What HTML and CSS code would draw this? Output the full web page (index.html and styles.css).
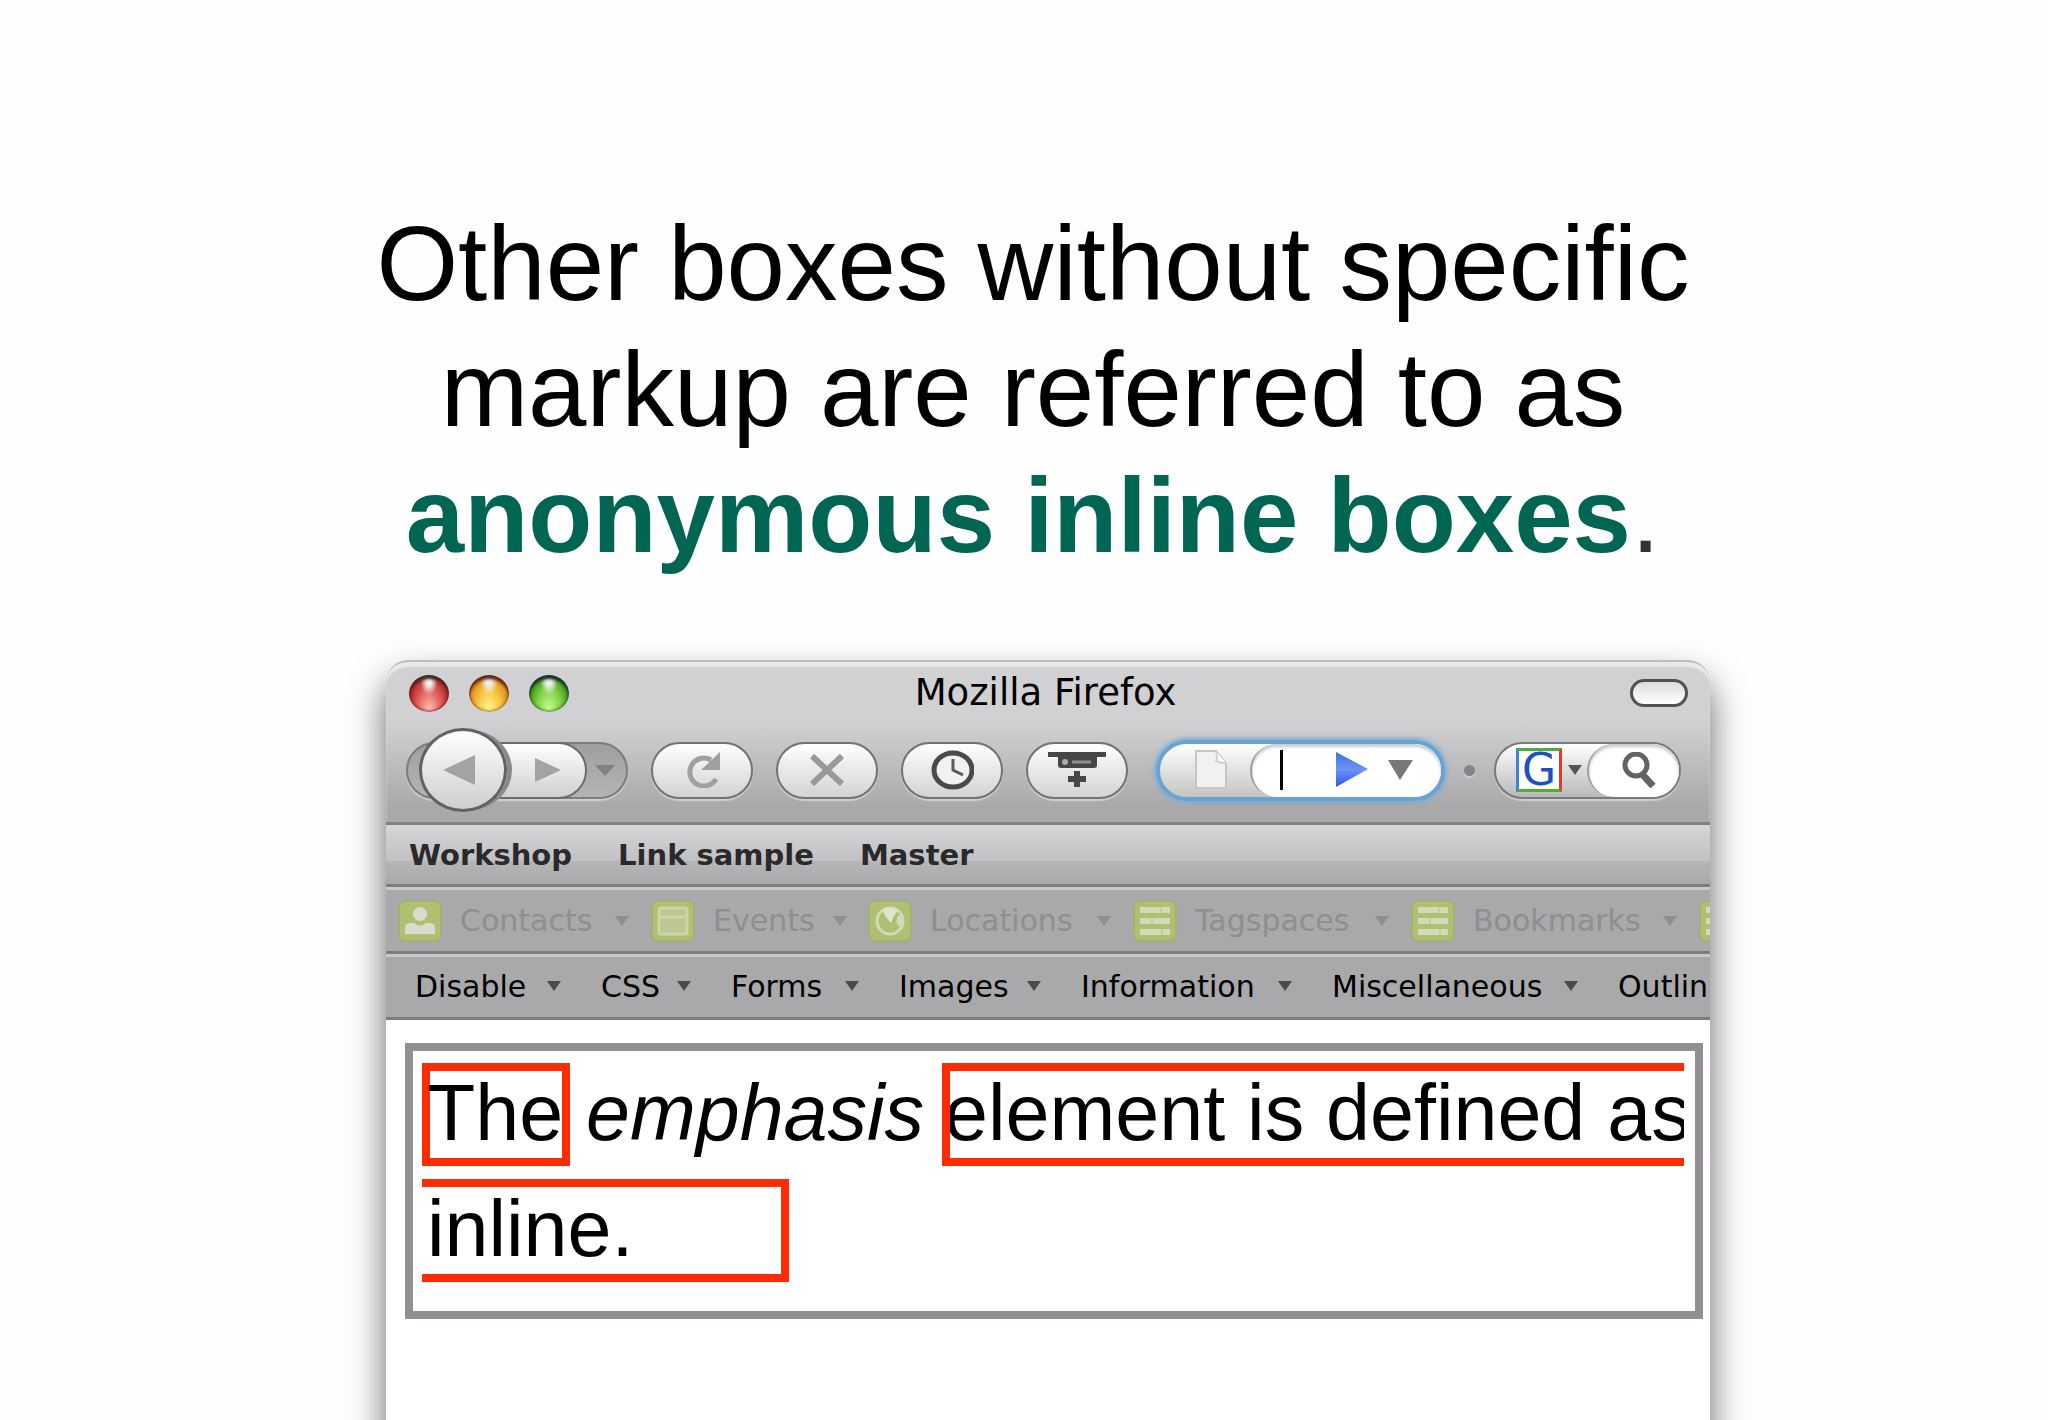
FILE: index.html
```html
<!DOCTYPE html>
<html lang="en">
<head>
<meta charset="utf-8">
<title>Anonymous inline boxes</title>
<link rel="stylesheet" href="styles.css">
</head>
<body>
<svg class="defs" width="0" height="0" aria-hidden="true">
  <defs>
    <linearGradient id="blue" x1="0" y1="0" x2="0" y2="1"><stop offset="0" stop-color="#3f6fe0"/><stop offset=".5" stop-color="#6c93f2"/><stop offset="1" stop-color="#2f55ee"/></linearGradient>
    <symbol id="arrow" viewBox="0 0 14 10"><path d="M0 0h14L7 10z" fill="currentColor"/></symbol>
    <symbol id="list" viewBox="0 0 44 42"><rect x="1" y="1" width="42" height="40" rx="6" fill="#b0c073" stroke="#a3b173" stroke-width="2"/><path d="M7 10h30M7 21h30M7 32h30" stroke="#d2dab8" stroke-width="6"/><path d="M18 21h2M28 32h2M27 10h2" stroke="#c2cd98" stroke-width="6"/></symbol>
  </defs>
</svg>
<main class="slide">
  <h1 class="heading">Other boxes without specific<br>markup are referred to as<br><strong>anonymous inline boxes</strong><span class="stop">.</span></h1>

  <section class="window" aria-label="Mozilla Firefox">
    <header class="chrome">
      <div class="titlebar">
        <div class="lights">
          <button class="light red" aria-label="Close"></button>
          <button class="light amber" aria-label="Minimize"></button>
          <button class="light green" aria-label="Zoom"></button>
        </div>
        <h2 class="title">Mozilla Firefox</h2>
        <button class="toggle" aria-label="Toggle toolbars"></button>
      </div>
      <div class="controls">
        <div class="nav">
          <button class="back" aria-label="Back"><svg width="32" height="30" viewBox="0 0 32 30"><path d="M0 15L32 0v30z" fill="#a3a2a4"/></svg></button>
          <button class="forward" aria-label="Forward"><svg width="26" height="24" viewBox="0 0 26 24"><path d="M26 12L0 0v24z" fill="#a3a2a4"/></svg></button>
          <button class="history" aria-label="History menu"><svg width="20" height="11" viewBox="0 0 20 11"><path d="M0 0h20L10 11z" fill="#828183"/></svg></button>
        </div>
        <button class="pill" aria-label="Reload"><svg width="38" height="36" viewBox="0 0 38 36"><path d="M28 8A14 14 0 1 0 33 27" fill="none" stroke="#a09fa1" stroke-width="5"/><path d="M37 0v18H18z" fill="#a09fa1"/></svg></button>
        <button class="pill" aria-label="Stop"><svg width="34" height="32" viewBox="0 0 34 32"><path d="M2 2l30 28M32 2L2 30" fill="none" stroke="#99989a" stroke-width="6"/></svg></button>
        <button class="pill" aria-label="Recent history"><svg width="44" height="40" viewBox="0 0 44 40"><ellipse cx="23" cy="20" rx="19" ry="17" fill="#f1f1f2" stroke="#4a494b" stroke-width="5"/><path d="M23 9v11l10 5" fill="none" stroke="#5a595b" stroke-width="3"/></svg></button>
        <button class="pill" aria-label="New tab"><svg width="58" height="36" viewBox="0 0 58 36"><path d="M0 0h58v5H49v8q0 3-3 3H13q-3 0-3-3V5H0z" fill="#464547"/><circle cx="17" cy="10" r="3" fill="#aaa"/><path d="M24 10h19" stroke="#929193" stroke-width="3"/><path d="M29 19v16M20 27h18" stroke="#464547" stroke-width="6"/></svg></button>
        <div class="url">
          <svg class="doc" width="34" height="40" viewBox="0 0 34 40"><path d="M2 1h20l10 12v25H2z" fill="#f1f1f2" stroke="#c6c6c7" stroke-width="2"/><path d="M22 1q2 8 0 10q4 2 10 2" fill="#fff" stroke="#d0d0d1" stroke-width="2"/></svg>
          <div class="field">
            <span class="caret"></span>
            <input class="address" type="text" aria-label="Address">
            <button class="plain" aria-label="Go"><svg width="32" height="36" viewBox="0 0 32 36"><path d="M0 0l32 17L0 35z" fill="url(#blue)"/></svg></button>
            <button class="plain" aria-label="Address history"><svg width="25" height="20" viewBox="0 0 25 20"><path d="M0 0h25L12 20z" fill="#78777a"/></svg></button>
          </div>
        </div>
        <span class="grip"></span>
        <div class="search">
          <button class="plain engine" aria-label="Search engine"><span class="g">G</span><svg width="14" height="10"><use href="#arrow"/></svg></button>
          <button class="find" aria-label="Search"><svg width="36" height="36" viewBox="0 0 36 36"><circle cx="16" cy="13" r="11" fill="none" stroke="#636264" stroke-width="5"/><path d="M22 22l11 12" stroke="#636264" stroke-width="7"/></svg></button>
        </div>
      </div>
    </header>

    <nav class="bookmarks" aria-label="Bookmarks">
      <a href="#workshop">Workshop</a><a href="#link">Link sample</a><a href="#master">Master</a>
    </nav>

    <div class="bar spaces">
      <button class="item" disabled><svg width="44" height="42" viewBox="0 0 44 42"><rect x="1" y="1" width="42" height="40" rx="6" fill="#b0c073" stroke="#a3b173" stroke-width="2"/><circle cx="22" cy="14" r="7" fill="#d9dccd"/><path d="M7 34v-6q0-5 6-5h3q6 5 12 0h3q6 0 6 5v6z" fill="#d9dccd"/></svg><span>Contacts</span><svg class="caret-down" width="14" height="10"><use href="#arrow"/></svg></button>
      <button class="item" disabled><svg width="44" height="42" viewBox="0 0 44 42"><rect x="1" y="1" width="42" height="40" rx="6" fill="#b0c073" stroke="#a3b173" stroke-width="2"/><rect x="8" y="8" width="28" height="26" rx="2" fill="#bcc794" stroke="#ccd5a8" stroke-width="3"/><path d="M8 17h28" stroke="#ccd5a8" stroke-width="3"/></svg><span>Events</span><svg class="caret-down" width="14" height="10"><use href="#arrow"/></svg></button>
      <button class="item" disabled><svg width="44" height="42" viewBox="0 0 44 42"><rect x="1" y="1" width="42" height="40" rx="6" fill="#b0c073" stroke="#a3b173" stroke-width="2"/><circle cx="22" cy="21" r="13" fill="#b0c073" stroke="#d2dab8" stroke-width="3"/><path d="M14 10q8-5 16 0l-4 6-3 7-5-6z" fill="#dfe4cd"/><path d="M30 15l5 2v6l-4 4-3-5z" fill="#d2dab8"/></svg><span>Locations</span><svg class="caret-down" width="14" height="10"><use href="#arrow"/></svg></button>
      <button class="item" disabled><svg width="44" height="42"><use href="#list"/></svg><span>Tagspaces</span><svg class="caret-down" width="14" height="10"><use href="#arrow"/></svg></button>
      <button class="item" disabled><svg width="44" height="42"><use href="#list"/></svg><span>Bookmarks</span><svg class="caret-down" width="14" height="10"><use href="#arrow"/></svg></button>
      <button class="item" disabled aria-label="More"><svg width="44" height="42"><use href="#list"/></svg></button>
    </div>

    <div class="bar developer">
      <button class="item">Disable<svg class="caret-down" width="14" height="10"><use href="#arrow"/></svg></button>
      <button class="item">CSS<svg class="caret-down" width="14" height="10"><use href="#arrow"/></svg></button>
      <button class="item">Forms<svg class="caret-down" width="14" height="10"><use href="#arrow"/></svg></button>
      <button class="item">Images<svg class="caret-down" width="14" height="10"><use href="#arrow"/></svg></button>
      <button class="item">Information<svg class="caret-down" width="14" height="10"><use href="#arrow"/></svg></button>
      <button class="item">Miscellaneous<svg class="caret-down" width="14" height="10"><use href="#arrow"/></svg></button>
      <button class="item">Outlin</button>
    </div>

    <div class="page">
      <div class="block">
        <div class="line">
          <span class="anon word">The</span>
          <em>emphasis</em>
          <span class="anon opens">element is defined as</span>
        </div>
        <div class="line">
          <span class="anon closes">inline.</span>
        </div>
      </div>
    </div>
  </section>
</main>
</body>
</html>
```
FILE: styles.css
```css
* { box-sizing: border-box; }

body {
  margin: 0;
  background: #fefefe;
  color: #000;
  font-family: "Liberation Sans", Arial, sans-serif;
}

button, input {
  margin: 0;
  padding: 0;
  border: 0;
  background: none;
  color: inherit;
  font: inherit;
}

svg { display: block; flex: none; }
.defs { position: absolute; }

.slide {
  display: flex;
  flex-direction: column;
  align-items: center;
  height: 100vh;
  padding: 201px 0 0 48px;
  overflow: hidden;
}

.heading {
  margin: 0 0 81px;
  padding-right: 30px;
  font-size: 105px;
  font-weight: 400;
  line-height: 126px;
  text-align: center;
}
.heading strong { color: #006653; }
.stop { color: #333; }

/* Browser window */
.window {
  display: flex;
  flex: 1 0 auto;
  flex-direction: column;
  width: 100%;
  max-width: 1324px;
  margin-bottom: -80px;
  border-radius: 22px 22px 0 0;
  background: #fff;
  box-shadow: 0 20px 36px rgba(0, 0, 0, .6);
  font-family: "DejaVu Sans", "Noto Sans", sans-serif;
  font-size: 30px;
}

.chrome {
  border-top: 2px solid #bdbdbe;
  border-bottom: 3px solid #828183;
  border-radius: 22px 22px 0 0;
  background: linear-gradient(#d1d0d2 60px, #a9a8aa 145px);
  box-shadow: inset 0 5px 2px #e9e9ea;
}

.titlebar {
  display: grid;
  grid-template-columns: 1fr auto 1fr;
  align-items: center;
  height: 62px;
  padding: 0 22px 0 23px;
}
.lights { display: flex; gap: 20px; }
.light {
  width: 40px;
  height: 37px;
  border-radius: 50%;
}
.red {
  background: radial-gradient(ellipse at 50% 20%, #eee 0 8%, transparent 30%), radial-gradient(ellipse at 50% 95%, #ffc4bb 0, #e2665f 40%, #b92824 72%);
  box-shadow: inset 0 4px 3px #40282b, inset 0 0 3px 1px #8a2020;
}
.amber {
  background: radial-gradient(ellipse at 50% 20%, #eee 0 8%, transparent 30%), radial-gradient(ellipse at 50% 95%, #fff69a 0, #f6c440 42%, #e08a10 75%);
  box-shadow: inset 0 4px 3px #5e2626, inset 0 0 3px 1px #97621c;
}
.green {
  background: radial-gradient(ellipse at 50% 20%, #eee 0 8%, transparent 30%), radial-gradient(ellipse at 50% 95%, #c6ff94 0, #84d24a 42%, #3f9a14 75%);
  box-shadow: inset 0 4px 3px #1d2f2b, inset 0 0 3px 1px #32701c;
}
.title {
  margin: 0;
  padding-right: 6px;
  font-size: 37px;
  font-weight: 400;
  line-height: 48px;
}
.toggle {
  justify-self: end;
  width: 58px;
  height: 28px;
  border: 3px solid #515052;
  border-radius: 14px;
  background: linear-gradient(#dcdcdd, #fff);
}

.controls {
  display: flex;
  align-items: center;
  gap: 23px;
  height: 98px;
  padding: 0 29px 6px 20px;
}

.nav {
  display: flex;
  align-items: center;
  width: 222px;
  height: 57px;
  border: 2px solid #7d7c7e;
  border-radius: 29px;
  background: linear-gradient(#9f9ea0, #b4b3b5);
  box-shadow: 0 2px 1px #cfcfd0;
}
.nav button {
  display: flex;
  align-items: center;
  justify-content: center;
}
.nav .back {
  position: relative;
  flex: none;
  width: 88px;
  height: 84px;
  margin: 0 -24px 0 11px;
  padding-right: 8px;
  border: 3px solid #626163;
  border-radius: 50%;
  background: linear-gradient(#fff, #cfcecf);
  box-shadow: 7px 0 0 -2px #8a898b;
}
.nav .forward {
  flex: none;
  width: 104px;
  height: 57px;
  padding-left: 26px;
  border: 2px solid #6c6b6d;
  border-radius: 0 29px 29px 0;
  background: linear-gradient(#fff, #d0cfd1);
}
.nav .history { flex: 1; padding-right: 4px; }

.pill {
  display: flex;
  flex: none;
  align-items: center;
  justify-content: center;
  width: 102px;
  height: 57px;
  border: 2px solid #737274;
  border-radius: 29px;
  background: linear-gradient(#fff, #d3d2d4);
  box-shadow: 0 2px 1px #cfcfd0;
}

.url {
  display: flex;
  flex: 1;
  align-items: center;
  height: 61px;
  margin: 0 -4px 0 5px;
  padding-left: 34px;
  border: 4px solid #67a3d3;
  border-radius: 31px;
  background: linear-gradient(#fff, #c4c4c2);
  box-shadow: 0 0 4px 2px #7aaed8;
}
.field {
  display: flex;
  flex: 1;
  align-items: center;
  gap: 20px;
  height: 53px;
  margin-left: 22px;
  padding: 0 28px;
  border-left: 2px solid #9a999b;
  border-radius: 27px;
  background: #fff;
  box-shadow: inset 0 3px 3px #ccc;
}
.caret { width: 3px; height: 40px; margin-right: -20px; background: #000; }
.address { flex: 1; width: 0; min-width: 0; outline: 0; }
.plain { display: flex; align-items: center; }

.grip {
  flex: none;
  width: 11px;
  height: 11px;
  border-radius: 50%;
  background: #858486;
  box-shadow: 0 2px 1px #cfcfd0;
}

.search {
  display: flex;
  flex: none;
  width: 187px;
  height: 57px;
  margin-left: -4px;
  border: 2px solid #79787a;
  border-radius: 29px;
  background: linear-gradient(#fff, #b9b8ba);
  box-shadow: 0 2px 1px #cfcfd0;
}
.engine {
  gap: 6px;
  padding-left: 20px;
  color: #555456;
}
.g {
  width: 46px;
  height: 44px;
  border: 3px solid;
  border-color: #4cae33 #e23a26 #4cae33 #3f7fe0;
  background: #fff;
  color: #1f4fc0;
  font-size: 44px;
  line-height: 38px;
  text-align: center;
}
.find {
  display: flex;
  flex: 1;
  align-items: center;
  justify-content: center;
  margin-left: 5px;
  padding-left: 8px;
  border-left: 2px solid #a09fa1;
  border-radius: 27px;
  background: #fff;
  box-shadow: inset 0 3px 3px #ccc;
}

.bookmarks {
  display: flex;
  align-items: center;
  gap: 46px;
  height: 62px;
  padding: 0 23px;
  border-bottom: 3px solid #7e7d7f;
  background: linear-gradient(#d6d5d7, #c1c0c2 60%, #b5b4b6 62%, #a9a8aa);
}
.bookmarks a {
  color: #2a292b;
  font-size: 29px;
  font-weight: 700;
  text-decoration: none;
}

.bar {
  display: grid;
  overflow: hidden;
  border-top: 3px solid #c9c8ca;
  border-bottom: 3px solid #7e7d7f;
  background: #a9a8aa;
}
.item {
  display: flex;
  align-items: center;
  min-width: 0;
  white-space: nowrap;
}
.caret-down { margin-left: auto; }

.spaces {
  grid-template-columns: 253px 217px 265px 278px 288px 44px;
  height: 67px;
  padding-left: 12px;
  color: #8f8e90;
}
.spaces .item { gap: 18px; padding-right: 22px; }
.spaces .item:last-child { padding-right: 0; }

.developer {
  grid-template-columns: 186px 130px 168px 182px 251px 286px 92px;
  height: 66px;
  padding: 0 0 2px 29px;
}
.developer .item { padding-right: 40px; }
.developer .item:last-child { padding-right: 0; }
.developer .caret-down { color: #4a494b; }

/* Rendered document */
.page {
  padding: 23px 7px 0 19px;
  font-family: "Liberation Sans", Arial, sans-serif;
  font-size: 79px;
  line-height: 83px;
}
.block {
  display: grid;
  gap: 13px;
  padding: 12px 11px 29px 9px;
  border: 8px solid #918f92;
}
.line { display: flex; min-width: 0; }
.line em { margin: 8px 18px 0 16px; }
.anon {
  height: 103px;
  border: 8px solid #fe2b03;
  white-space: nowrap;
  text-indent: -3px;
}
.word { width: 148px; }
.opens { flex: 1; min-width: 0; overflow: hidden; border-right: 0; text-indent: -6px; }
.closes { width: 367px; border-left: 0; text-indent: 5px; }
```
